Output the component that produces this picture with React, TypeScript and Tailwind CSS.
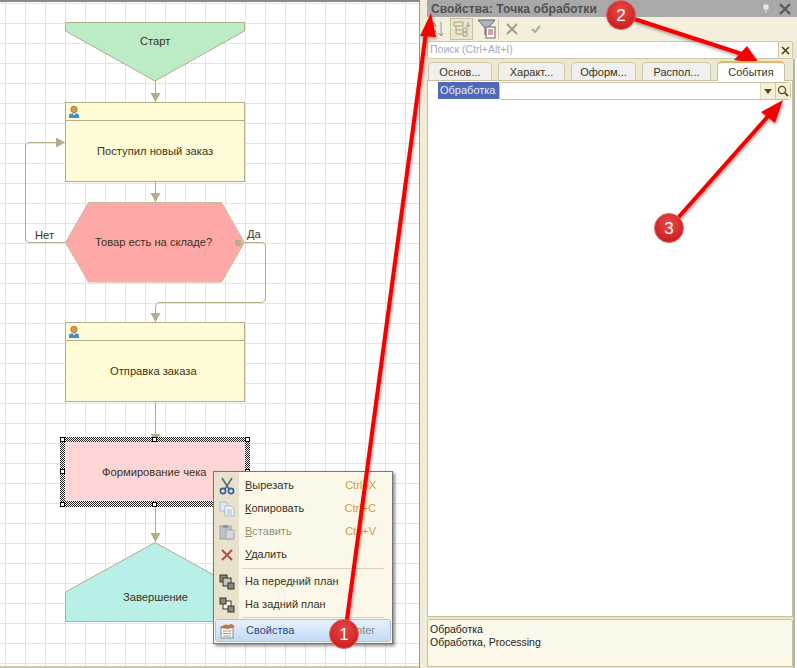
import React from 'react';

const font = { fontFamily: '"Liberation Sans", Arial, sans-serif' };

const stroke = '#b5ad88';

// Person glyph in the process header
function Person({ x, y }: { x: number; y: number }) {
  return (
    <g transform={`translate(${x} ${y})`}>
      <circle cx="5" cy="3.5" r="3.2" fill="#d99a4e" stroke="#8a5a22" strokeWidth="0.6" />
      <path d="M0 12 V9.5 Q0 7.5 2.5 7.5 H7.5 Q10 7.5 10 9.5 V12 Z" fill="#3f8fc4" />
      <path d="M3.5 7.5 L5 9.5 L6.5 7.5 Z" fill="#e8f2f8" />
    </g>
  );
}

function Head({ x, y, dir = 'down' }: { x: number; y: number; dir?: 'down' | 'right' }) {
  const pts = dir === 'down' ? `${x - 5},${y - 9} ${x + 5},${y - 9} ${x},${y}` : `${x - 9},${y - 5} ${x - 9},${y + 5} ${x},${y}`;
  return <polygon points={pts} fill={stroke} />;
}

function Handle({ x, y }: { x: number; y: number }) {
  return <rect x={x - 2} y={y - 2} width="4" height="4" fill="#fff" stroke="#000" strokeWidth="1" />;
}

function Label({ className, children }: { className: string; children: React.ReactNode }) {
  return <div className={`absolute text-[11.2px] leading-[14px] text-[#3a3320] whitespace-nowrap ${className}`}>{children}</div>;
}

function Diagram() {
  return (
    <div className="relative w-[420px] h-[668px] shrink-0 overflow-hidden bg-white border-t-2 border-t-[#8c8c80] border-r border-r-[#9a9a90]">
      <div className="absolute inset-0 bg-[linear-gradient(#e4e4e4_1px,transparent_1px),linear-gradient(90deg,#e4e4e4_1px,transparent_1px)] bg-[length:20px_20px] bg-[position:5px_1px]" />
      <svg className="absolute left-0 top-[-2px]" width="420" height="668" fill="none">
        <polygon points="65.5,22.5 244.5,22.5 244.5,31 155,81 65.5,31" fill="#bbecc7" stroke={stroke} />
        <path d="M155.5 81 V102" stroke={stroke} />
        <Head x={155.5} y={102} />

        <rect x="65.5" y="102.5" width="179" height="79" fill="#fffbd6" stroke={stroke} />
        <path d="M65.5 120.5 H244.5" stroke={stroke} />
        <Person x={69} y={106} />
        <path d="M155.5 181 V202" stroke={stroke} />
        <Head x={155.5} y={202} />

        <polygon points="88.5,202.5 221.5,202.5 244.5,242.5 221.5,282 88.5,282 65.5,242.5" fill="#ffa8a8" stroke="#c9bb98" />
        <path d="M65 242.5 H30 Q25.5 242.5 25.5 238 V147 Q25.5 142.5 30 142.5 H60" stroke={stroke} />
        <Head x={65} y={142.5} dir="right" />
        <path d="M245 242.5 H261 Q265.5 242.5 265.5 247 V297 Q265.5 302.5 261 302.5 H160 Q155.5 302.5 155.5 307 V322" stroke={stroke} />
        <Head x={155.5} y={322} />
        <rect x="235" y="240" width="6" height="6" fill={stroke} />

        <rect x="65.5" y="322.5" width="179" height="79" fill="#fffbd6" stroke={stroke} />
        <path d="M65.5 340.5 H244.5" stroke={stroke} />
        <Person x={69} y={326} />
        <path d="M155.5 401 V442" stroke={stroke} />
        <Head x={155.5} y={443} />

        <defs>
          <pattern id="hatch" width="2" height="2" patternUnits="userSpaceOnUse">
            <rect width="2" height="2" fill="#fff" />
            <rect width="1" height="1" fill="#222" />
            <rect x="1" y="1" width="1" height="1" fill="#222" />
          </pattern>
        </defs>
        <rect x="60" y="437" width="190" height="70" fill="url(#hatch)" />
        <rect x="65" y="442" width="180" height="59" fill="#ffd5d5" />
        <Handle x={62.5} y={439.5} />
        <Handle x={154.5} y={439.5} />
        <Handle x={247.5} y={439.5} />
        <Handle x={62.5} y={471.5} />
        <Handle x={247.5} y={471.5} />
        <Handle x={62.5} y={504.5} />
        <Handle x={154.5} y={504.5} />
        <Handle x={247.5} y={504.5} />
        <path d="M155.5 507 V542" stroke={stroke} />
        <Head x={155.5} y={542} />

        <polygon points="155,542.5 244.5,592 244.5,621.5 65.5,621.5 65.5,592" fill="#b8efe8" stroke={stroke} />
      </svg>
      <div className="absolute left-0 right-0 bottom-0 h-[2px] bg-[#cfc8a8]" />
      <Label className="left-[140px] top-[32px]">Старт</Label>
      <Label className="left-[97px] top-[142px]">Поступил новый заказ</Label>
      <Label className="left-[35px] top-[226px]">Нет</Label>
      <Label className="left-[247px] top-[225px]">Да</Label>
      <Label className="left-[95px] top-[233px]">Товар есть на складе?</Label>
      <Label className="left-[110px] top-[362px]">Отправка заказа</Label>
      <Label className="left-[102px] top-[463px]">Формирование чека</Label>
      <Label className="left-[123px] top-[588px]">Завершение</Label>
    </div>
  );
}

function MenuRow({ icon, label, hot, shortcut, disabled, active }: { icon: React.ReactNode; label: string; hot?: string; shortcut?: string; disabled?: boolean; active?: boolean }) {
  return (
    <div className={`relative flex items-center h-[23px] ${active ? 'mx-px' : ''}`}>
      {active && <div className="absolute inset-0 rounded-[3px] border border-[#a9c2e8] bg-[linear-gradient(#e6f0fc,#c4dbf6)]" />}
      <div className={`relative w-[25px] h-full flex items-center justify-center shrink-0 ${active ? '' : 'bg-[#e8e2cc]'}`}>{icon}</div>
      <div className={`relative pl-[6px] text-[11px] ${disabled ? 'text-[#9a8f68]' : active ? 'text-[#2e4a86]' : 'text-[#3a3320]'}`}>
        {hot ? <span className="underline">{hot}</span> : null}
        {hot ? label.slice(hot.length) : label}
      </div>
      {shortcut && <div className={`relative ml-auto pr-[16px] text-[11px] ${active ? 'text-[#8a8a7a]' : 'text-[#c8a040]'}`}>{shortcut}</div>}
    </div>
  );
}

function Separator({ className }: { className: string }) {
  return (
    <div className={`flex items-center ${className}`}>
      <div className="w-[25px] h-full bg-[#e8e2cc] shrink-0" />
      <div className="ml-[3px] mr-2 flex-1 h-px bg-[#d8d2b8]" />
    </div>
  );
}

const ScissorsIcon = (
  <svg width="16" height="18" viewBox="0 0 16 18" fill="none">
    <path d="M3 1 L10 12 M13 1 L6 12" stroke="#5b6a7a" strokeWidth="1.6" />
    <circle cx="4" cy="14" r="2.6" stroke="#2c5fa8" strokeWidth="1.6" />
    <circle cx="12" cy="14" r="2.6" stroke="#2c5fa8" strokeWidth="1.6" />
  </svg>
);
const CopyIcon = (
  <svg width="16" height="16" viewBox="0 0 16 16">
    <path d="M1 1 H7 L9 3 V10 H1 Z" fill="#dfe7f2" stroke="#a9b8cc" />
    <path d="M6 5 H12 L15 8 V15 H6 Z" fill="#f2f5fa" stroke="#a9b8cc" />
    <path d="M8 9 H13 M8 11 H13 M8 13 H13" stroke="#a9b8cc" />
  </svg>
);
const PasteIcon = (
  <svg width="16" height="16" viewBox="0 0 16 16">
    <rect x="1" y="2" width="11" height="13" fill="#bcc2c6" stroke="#9ba2a8" />
    <rect x="4" y="1" width="5" height="3" fill="#8f979d" />
    <path d="M7 6 H15 V15 H7 Z" fill="#d4d8da" stroke="#a3a9ae" />
  </svg>
);
const DeleteIcon = (
  <svg width="12" height="12" viewBox="0 0 12 12">
    <path d="M1 1 L11 11 M11 1 L1 11" stroke="#b84a45" strokeWidth="2" />
  </svg>
);
const FrontIcon = (
  <svg width="16" height="16" viewBox="0 0 16 16">
    <rect x="1" y="1" width="7" height="7" fill="#8a8a80" stroke="#333" />
    <rect x="4" y="4" width="8" height="8" fill="#c4c4bc" stroke="#333" />
    <rect x="9" y="9" width="6" height="6" fill="#8a8a80" stroke="#333" />
  </svg>
);
const BackIcon = (
  <svg width="16" height="16" viewBox="0 0 16 16">
    <rect x="4" y="4" width="8" height="8" fill="#fbf8ea" stroke="#333" />
    <rect x="1" y="1" width="6" height="6" fill="#8a8a80" stroke="#333" />
    <rect x="9" y="9" width="6" height="6" fill="#8a8a80" stroke="#333" />
  </svg>
);
const PropsIcon = (
  <svg width="18" height="16" viewBox="0 0 18 16">
    <rect x="2" y="4" width="12" height="11" fill="#fff" stroke="#8a8a80" />
    <path d="M4 8 H12 M4 10.5 H12 M4 13 H12" stroke="#9a9a90" />
    <path d="M1 5 Q5 0 9 2 L13 1 L16 4 L9 6 Z" fill="#c0704a" />
  </svg>
);

function ContextMenu() {
  return (
    <div className="absolute left-[213px] top-[471px] w-[180px] h-[173px] bg-[#fbf8ea] border border-[#77776c] shadow-[2px_2px_3px_rgba(0,0,0,0.45)] flex flex-col">
      <div className="h-[2px] w-[25px] shrink-0 bg-[#e8e2cc]" />
      <MenuRow icon={ScissorsIcon} label="Вырезать" hot="В" shortcut="Ctrl+X" />
      <MenuRow icon={CopyIcon} label="Копировать" hot="К" shortcut="Ctrl+C" />
      <MenuRow icon={PasteIcon} label="Вставить" hot="В" shortcut="Ctrl+V" disabled />
      <MenuRow icon={DeleteIcon} label="Удалить" hot="У" />
      <Separator className="h-[4px]" />
      <MenuRow icon={FrontIcon} label="На передний план" />
      <MenuRow icon={BackIcon} label="На задний план" />
      <Separator className="h-[3px]" />
      <MenuRow icon={PropsIcon} label="Свойства" shortcut="Alt+Enter" active />
    </div>
  );
}

function Tab({ label, active, className }: { label: string; active?: boolean; className: string }) {
  return (
    <div
      className={`flex items-center justify-center shrink-0 rounded-t-[5px] border border-b-0 text-[11px] text-[#3a3320] ${
        active ? 'h-[20px] z-10 bg-white border-[#c8c0a0] border-t-2 border-t-[#e8b860]' : 'h-[19px] bg-[#f0f0ee] border-[#cfc8a8]'
      } ${className}`}
    >
      {label}
    </div>
  );
}

function Panel() {
  return (
    <div className="flex-1 h-[668px] flex bg-[#ece7d0]">
      <div className="w-[7px] shrink-0 bg-[#f0ecd8]" />
      <div className="flex-1 min-w-0 flex flex-col">
        {/* Title */}
        <div className="h-[17px] shrink-0 pl-[4px] pr-[6px] flex items-center bg-[#a9a9a9]">
          <span className="text-[12px] tracking-[0.1px] font-bold text-[#505050] whitespace-nowrap">Свойства: Точка обработки</span>
          <svg className="ml-auto mr-[10px]" width="6" height="9" viewBox="0 0 6 9">
            <path d="M1 1 H5 V5 H1 Z M3 5 V9" fill="#e8e8e8" stroke="#e8e8e8" />
          </svg>
          <svg width="12" height="12" viewBox="0 0 12 12">
            <path d="M1 1 L11 11 M11 1 L1 11" stroke="#5c5c5c" strokeWidth="2.4" />
          </svg>
        </div>
        {/* Toolbar */}
        <div className="h-[24px] shrink-0 flex items-center bg-[#f3efdc] pl-[4px]">
          <svg width="14" height="17" viewBox="0 0 14 17" fill="none">
            <path d="M1 6 L3 1 L5 6 M1.8 4.5 H4.2 M1 10 H5 L1 15 H5" stroke="#a8a080" strokeWidth="1" />
            <path d="M10 1 V15 M8 12 L10 15 L12 12" stroke="#8a9aa0" strokeWidth="1" />
          </svg>
          <div className="ml-[5px] w-[23px] h-[22px] flex items-center justify-center border border-[#c8c0a0] bg-[#ebe6ce]">
            <svg width="17" height="17" viewBox="0 0 17 17" fill="none">
              <path d="M1 1 H10 V5 H1 Z M3 5 V13 H10 M3 9 H10" stroke="#a8a080" />
              <path d="M10 7 H14 V11 H10 Z M10 11 H14 V15 H10 Z" stroke="#a8a080" />
              <path d="M15 1 V6 M13 4 L15 6 L17 4" stroke="#8a9aa0" />
            </svg>
          </div>
          <svg className="ml-[4px]" width="19" height="20" viewBox="0 0 19 20">
            <path d="M1 1 H18 L11 9 V14 L8 16 V9 Z" fill="#b0b4b8" stroke="#666" />
            <rect x="9" y="8" width="9" height="11" fill="#fff" stroke="#666" />
            <path d="M11 11 H16 M11 13 H16 M11 15 H16" stroke="#c04040" />
          </svg>
          <div className="ml-[2px] w-px h-[20px] bg-[#d0c8a8]" />
          <svg className="ml-[7px]" width="12" height="12" viewBox="0 0 12 12">
            <path d="M1 1 L11 11 M11 1 L1 11" stroke="#a89c90" strokeWidth="2" />
          </svg>
          <svg className="ml-[13px]" width="10" height="8" viewBox="0 0 10 8" fill="none">
            <path d="M1 4 L4 7 L9 1" stroke="#a8b098" strokeWidth="2" />
          </svg>
        </div>
        {/* Search */}
        <div className="h-[18px] shrink-0 mr-[4px] flex items-stretch border border-[#d0c8a8] rounded-[2px] bg-white">
          <div className="flex-1 pl-[2px] flex items-center text-[10.5px] text-[#a8a8c0]">Поиск (Ctrl+Alt+I)</div>
          <div className="w-[14px] flex items-center justify-center bg-[#f4efd5] border-l border-l-[#d0c8a8]">
            <svg width="9" height="9" viewBox="0 0 9 9">
              <path d="M1 1 L8 8 M8 1 L1 8" stroke="#4a4220" strokeWidth="1.6" />
            </svg>
          </div>
        </div>
        <div className="flex-1 min-h-0 flex">
          <div className="flex-1 min-w-0 flex flex-col">
            {/* Tabs */}
            <div className="h-[22px] shrink-0 flex items-end pl-[1px] gap-[6px]">
              <Tab label="Основ..." className="w-[64px]" />
              <Tab label="Характ..." className="w-[67px]" />
              <Tab label="Оформ..." className="w-[65px]" />
              <Tab label="Распол..." className="w-[69px]" />
              <Tab label="События" active className="w-[68px]" />
            </div>
            {/* Property list */}
            <div className="-mt-px flex-1 bg-white border border-[#c8c0a0] pt-[1px] pl-[10px] pr-px">
              <div className="flex h-[18px] items-start">
                <div className="w-[61px] h-[17px] pl-[2px] flex items-center bg-[#4f68b8] text-[11px] text-[#e8ecf8]">Обработка</div>
                <div className="flex-1 h-[18px] flex border border-[#c8c0a0] rounded-[3px]">
                  <div className="flex-1" />
                  <div className="w-[15px] flex items-center justify-center bg-[#f4efd5] border-l border-l-[#e0d8b8]">
                    <svg width="8" height="5" viewBox="0 0 8 5">
                      <path d="M0 0 H8 L4 5 Z" fill="#5a4a10" />
                    </svg>
                  </div>
                  <div className="w-[15px] flex items-center justify-center bg-[#f4efd5] border-l border-l-[#d0c8a8]">
                    <svg width="12" height="12" viewBox="0 0 12 12" fill="none">
                      <circle cx="5" cy="5" r="3.6" stroke="#5a4a10" strokeWidth="1.3" />
                      <path d="M8 8 L11 11" stroke="#5a4a10" strokeWidth="1.8" />
                    </svg>
                  </div>
                </div>
              </div>
            </div>
            {/* Description */}
            <div className="h-[48px] shrink-0 mt-[2px] mb-[1px] pl-[2px] pt-[3px] border border-[#c8c0a0] rounded-t-[3px] bg-[#fbf8ea] text-[10.5px] leading-[13px] text-[#222]">
              <div>Обработка</div>
              <div>Обработка, Processing</div>
            </div>
          </div>
          <div className="w-[4px] shrink-0 ml-0 bg-white border-l-2 border-l-[#b4b4aa]" />
        </div>
      </div>
    </div>
  );
}

function Badge({ x, y, n }: { x: number; y: number; n: number }) {
  return (
    <g>
      <defs>
        <radialGradient id={`b${n}`} cx="50%" cy="35%" r="70%">
          <stop offset="0%" stopColor="#e84a4a" />
          <stop offset="100%" stopColor="#c81818" />
        </radialGradient>
      </defs>
      <circle cx={x} cy={y} r="14.5" fill={`url(#b${n})`} stroke="#e86060" strokeWidth="1" />
      <text x={x} y={y + 6} textAnchor="middle" fontSize="17" fill="#fff" fontFamily="Liberation Sans, sans-serif">{n}</text>
    </g>
  );
}

function Annotations() {
  return (
    <svg className="absolute inset-0 pointer-events-none" width="797" height="668">
      <defs>
        <filter id="sh" x="-10%" y="-10%" width="120%" height="120%">
          <feDropShadow dx="1" dy="2" stdDeviation="1.5" floodColor="#000" floodOpacity="0.35" />
        </filter>
      </defs>
      <g filter="url(#sh)">
        <path d="M345 634 L426 32" stroke="#f40000" strokeWidth="4" />
        <polygon points="431,13 420,36 436,37" fill="#f40000" />
        <path d="M622 15 L745 55" stroke="#f40000" strokeWidth="4" />
        <polygon points="759,63 734,60 747,46" fill="#f40000" />
        <path d="M669 228 L770 114" stroke="#f40000" strokeWidth="4" />
        <polygon points="783,100 761,112 775,123" fill="#f40000" />
      </g>
      <Badge x={344} y={634} n={1} />
      <Badge x={621} y={15} n={2} />
      <Badge x={669} y={228} n={3} />
    </svg>
  );
}

export default function App() {
  return (
    <div className="relative flex w-[797px] h-[668px] overflow-hidden bg-white" style={font}>
      <Diagram />
      <Panel />
      <ContextMenu />
      <Annotations />
    </div>
  );
}
